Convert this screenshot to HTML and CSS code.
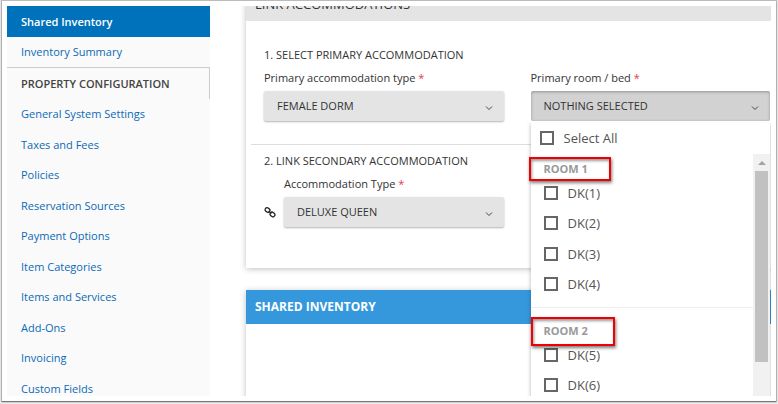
FILE: index.html
```html
<!DOCTYPE html>
<html lang="en">
<head>
    <meta charset="UTF-8">
    <meta name="viewport" content="width=device-width, initial-scale=1.0">
    <title>Shared Inventory</title>
    <link rel="stylesheet" href="styles.css">
</head>
<body>
    <div class="frame">
        <div class="page">
            <!-- Sidebar -->
            <nav class="sidebar">
                <a class="nav-link active" href="#">Shared Inventory</a>
                <a class="nav-link" href="#">Inventory Summary</a>
                <h2 class="nav-title">PROPERTY CONFIGURATION</h2>
                <ul class="nav-list">
                    <li><a href="#">General System Settings</a></li>
                    <li><a href="#">Taxes and Fees</a></li>
                    <li><a href="#">Policies</a></li>
                    <li><a href="#">Reservation Sources</a></li>
                    <li><a href="#">Payment Options</a></li>
                    <li><a href="#">Item Categories</a></li>
                    <li><a href="#">Items and Services</a></li>
                    <li><a href="#">Add-Ons</a></li>
                    <li><a href="#">Invoicing</a></li>
                    <li><a href="#">Custom Fields</a></li>
                </ul>
            </nav>

            <main class="content">
                <!-- Link accommodations -->
                <section class="card link-card">
                    <h2 class="card-header">LINK ACCOMMODATIONS</h2>
                    <div class="card-body">
                        <h3 class="step-title">1. SELECT PRIMARY ACCOMMODATION</h3>
                        <div class="row">
                            <div class="field">
                                <label for="primaryType">Primary accommodation type <span class="required">*</span></label>
                                <div class="select-wrap">
                                    <select id="primaryType" class="select">
                                        <option>FEMALE DORM</option>
                                    </select>
                                    <svg class="chevron" viewBox="0 0 8 6"><path d="M1 1.5l3 3 3-3"/></svg>
                                </div>
                            </div>
                            <div class="field">
                                <label for="primaryRoom">Primary room / bed <span class="required">*</span></label>
                                <div class="select-wrap">
                                    <button id="primaryRoom" class="select open" type="button" aria-expanded="true">NOTHING SELECTED</button>
                                    <svg class="chevron" viewBox="0 0 8 6"><path d="M1 1.5l3 3 3-3"/></svg>

                                    <!-- Room dropdown -->
                                    <div class="dropdown">
                                        <label class="select-all"><input type="checkbox">Select All</label>
                                        <div class="scroll-area">
                                            <div class="options">
                                                <div class="group">
                                                    <h4 class="group-title"><span class="mark mark-first"></span>ROOM 1</h4>
                                                    <label class="option"><input type="checkbox">DK(1)</label>
                                                    <label class="option"><input type="checkbox">DK(2)</label>
                                                    <label class="option"><input type="checkbox">DK(3)</label>
                                                    <label class="option"><input type="checkbox">DK(4)</label>
                                                </div>
                                                <div class="group">
                                                    <h4 class="group-title"><span class="mark mark-second"></span>ROOM 2</h4>
                                                    <label class="option"><input type="checkbox">DK(5)</label>
                                                    <label class="option"><input type="checkbox">DK(6)</label>
                                                </div>
                                            </div>
                                            <div class="scrollbar">
                                                <svg class="scroll-up" viewBox="0 0 8 4"><path d="M4 0l4 4H0z"/></svg>
                                                <div class="thumb"></div>
                                            </div>
                                        </div>
                                    </div>
                                </div>
                            </div>
                        </div>

                        <hr class="divider">

                        <h3 class="step-title">2. LINK SECONDARY ACCOMMODATION</h3>
                        <div class="row">
                            <div class="field linked">
                                <label for="secondaryType">Accommodation Type <span class="required">*</span></label>
                                <svg class="link-icon" viewBox="0 0 12 12">
                                    <rect x="1" y="2" width="5" height="4" rx="2" transform="rotate(40 3.5 4)"/>
                                    <rect x="6" y="6.5" width="5" height="4" rx="2" transform="rotate(40 8.5 8.5)"/>
                                    <path d="M4.6 5l2.8 2.5"/>
                                </svg>
                                <div class="select-wrap">
                                    <select id="secondaryType" class="select">
                                        <option>DELUXE QUEEN</option>
                                    </select>
                                    <svg class="chevron" viewBox="0 0 8 6"><path d="M1 1.5l3 3 3-3"/></svg>
                                </div>
                            </div>
                        </div>
                    </div>
                </section>

                <!-- Shared inventory -->
                <section class="card inventory-card">
                    <h2 class="card-header">SHARED INVENTORY</h2>
                </section>
            </main>
        </div>
    </div>
</body>
</html>
```

FILE: styles.css
```css
* {
    box-sizing: border-box;
}

body {
    margin: 0;
    height: 100vh;
    padding: 1px 2px 3px;
    background: #ececec;
    color: #333;
    font-family: "Open Sans", "Noto Sans", sans-serif;
    font-size: 11px;
    line-height: 16px;
    overflow: hidden;
}

h2, h3, h4, ul {
    margin: 0;
    padding: 0;
    font-size: 11px;
}

.frame {
    height: 100%;
    padding: 5px;
    background: #fff;
    box-shadow: 0 1px 1px #777, 0 0 1px 1px #bbb;
}

.page {
    display: flex;
    height: 100%;
    overflow: hidden;
}

/* Sidebar */
.sidebar {
    flex: 0 0 203px;
    background: #fafafa;
}

.sidebar a {
    display: block;
    padding-left: 14px;
    color: #0a6ab6;
    text-decoration: none;
    line-height: 30px;
}

.sidebar .active {
    background: #0072bc;
    color: #fff;
    font-weight: 600;
    line-height: 31px;
}

.nav-title {
    padding-left: 14px;
    border-top: 1px solid #ccc;
    border-right: 1px solid #ccc;
    color: #444;
    font-weight: 600;
    line-height: 31px;
}

.nav-list {
    list-style: none;
}

.nav-list li:nth-child(even) a {
    line-height: 31px;
}

/* Cards */
.content {
    flex: 1;
    padding-left: 36px;
    min-width: 0;
}

.card {
    background: #fff;
    box-shadow: 0 1px 6px rgba(0, 0, 0, 0.25);
}

.card-header {
    padding: 0 9px;
    font-size: 13px;
    line-height: 34px;
}

.link-card {
    margin-top: -19px;
}

.link-card .card-header {
    background: #e4e4e4;
    font-weight: 400;
}

.card-body {
    padding: 26px 1px 41px 18px;
}

.inventory-card {
    height: 200px;
    margin-top: 22px;
}

.inventory-card .card-header {
    background: #3598dc;
    color: #fff;
    font-size: 12px;
    font-weight: 700;
}

/* Form */
.step-title {
    font-weight: 400;
}

.row {
    display: grid;
    grid-template-columns: 1fr 1fr;
    gap: 27px;
    margin-top: 7px;
}

.field > label {
    display: block;
    margin-bottom: 5px;
}

.required {
    color: #e8394a;
}

.select-wrap {
    position: relative;
}

.select {
    display: block;
    width: 100%;
    height: 30px;
    padding: 0 13px;
    appearance: none;
    border: 0;
    border-radius: 2px;
    background: #e4e4e4;
    box-shadow: 0 1px 2px rgba(0, 0, 0, 0.3);
    color: #333;
    font: inherit;
    text-align: left;
}

.select.open {
    background: #d2d2d2;
    box-shadow: inset 0 1px 3px rgba(0, 0, 0, 0.3);
}

.chevron {
    position: absolute;
    top: 14px;
    right: 11px;
    width: 8px;
    height: 6px;
    fill: none;
    stroke: #444;
}

.divider {
    height: 1px;
    margin: 23px 0 8px -13px;
    border: 0;
    background: #ddd;
}

.linked {
    display: grid;
    grid-template-columns: 12px 1fr;
    column-gap: 8px;
    align-items: center;
}

.linked label {
    grid-column: 2;
}

.link-icon {
    width: 12px;
    height: 12px;
    fill: none;
    stroke: #222;
    stroke-width: 1.3;
}

/* Dropdown */
.dropdown {
    position: absolute;
    top: 100%;
    left: 0;
    right: 0;
    z-index: 10;
    padding-top: 7px;
    background: #fff;
    box-shadow: 0 3px 4px rgba(0, 0, 0, 0.3);
    color: #555;
    font-size: 13px;
}

.dropdown label {
    display: flex;
    align-items: center;
    gap: 10px;
}

.dropdown input {
    width: 14px;
    height: 14px;
    margin: 0;
    appearance: none;
    border: 2px solid #666;
    background: #fff;
}

.select-all {
    height: 20px;
    margin-bottom: 6px;
    padding-left: 9px;
}

.scroll-area {
    display: flex;
}

.options {
    flex: 1;
}

.group + .group {
    margin-top: 8px;
    padding-top: 8px;
    border-top: 1px solid #eee;
}

.group-title {
    position: relative;
    padding: 7px 13px 0;
    color: #999;
    font-size: 11px;
    line-height: 16px;
}

.option {
    height: 30px;
    padding-left: 13px;
}

.option:nth-child(even) {
    height: 31px;
}

.mark {
    position: absolute;
    border: 2px solid #f00000;
    box-shadow: 1px 2px 3px rgba(0, 0, 0, 0.5), inset 1px 2px 3px rgba(0, 0, 0, 0.4);
}

.mark-first {
    top: 3px;
    left: -2px;
    width: 82px;
    height: 24px;
}

.mark-second {
    top: 1px;
    left: 0;
    width: 84px;
    height: 29px;
}

.scrollbar {
    display: flex;
    flex-direction: column;
    align-items: center;
    width: 17px;
    background: #f1f1f1;
}

.scroll-up {
    width: 8px;
    height: 4px;
    margin: 7px 0 6px;
    fill: #a3a3a3;
}

.thumb {
    width: 13px;
    height: 191px;
    background: #c1c1c1;
}
```
